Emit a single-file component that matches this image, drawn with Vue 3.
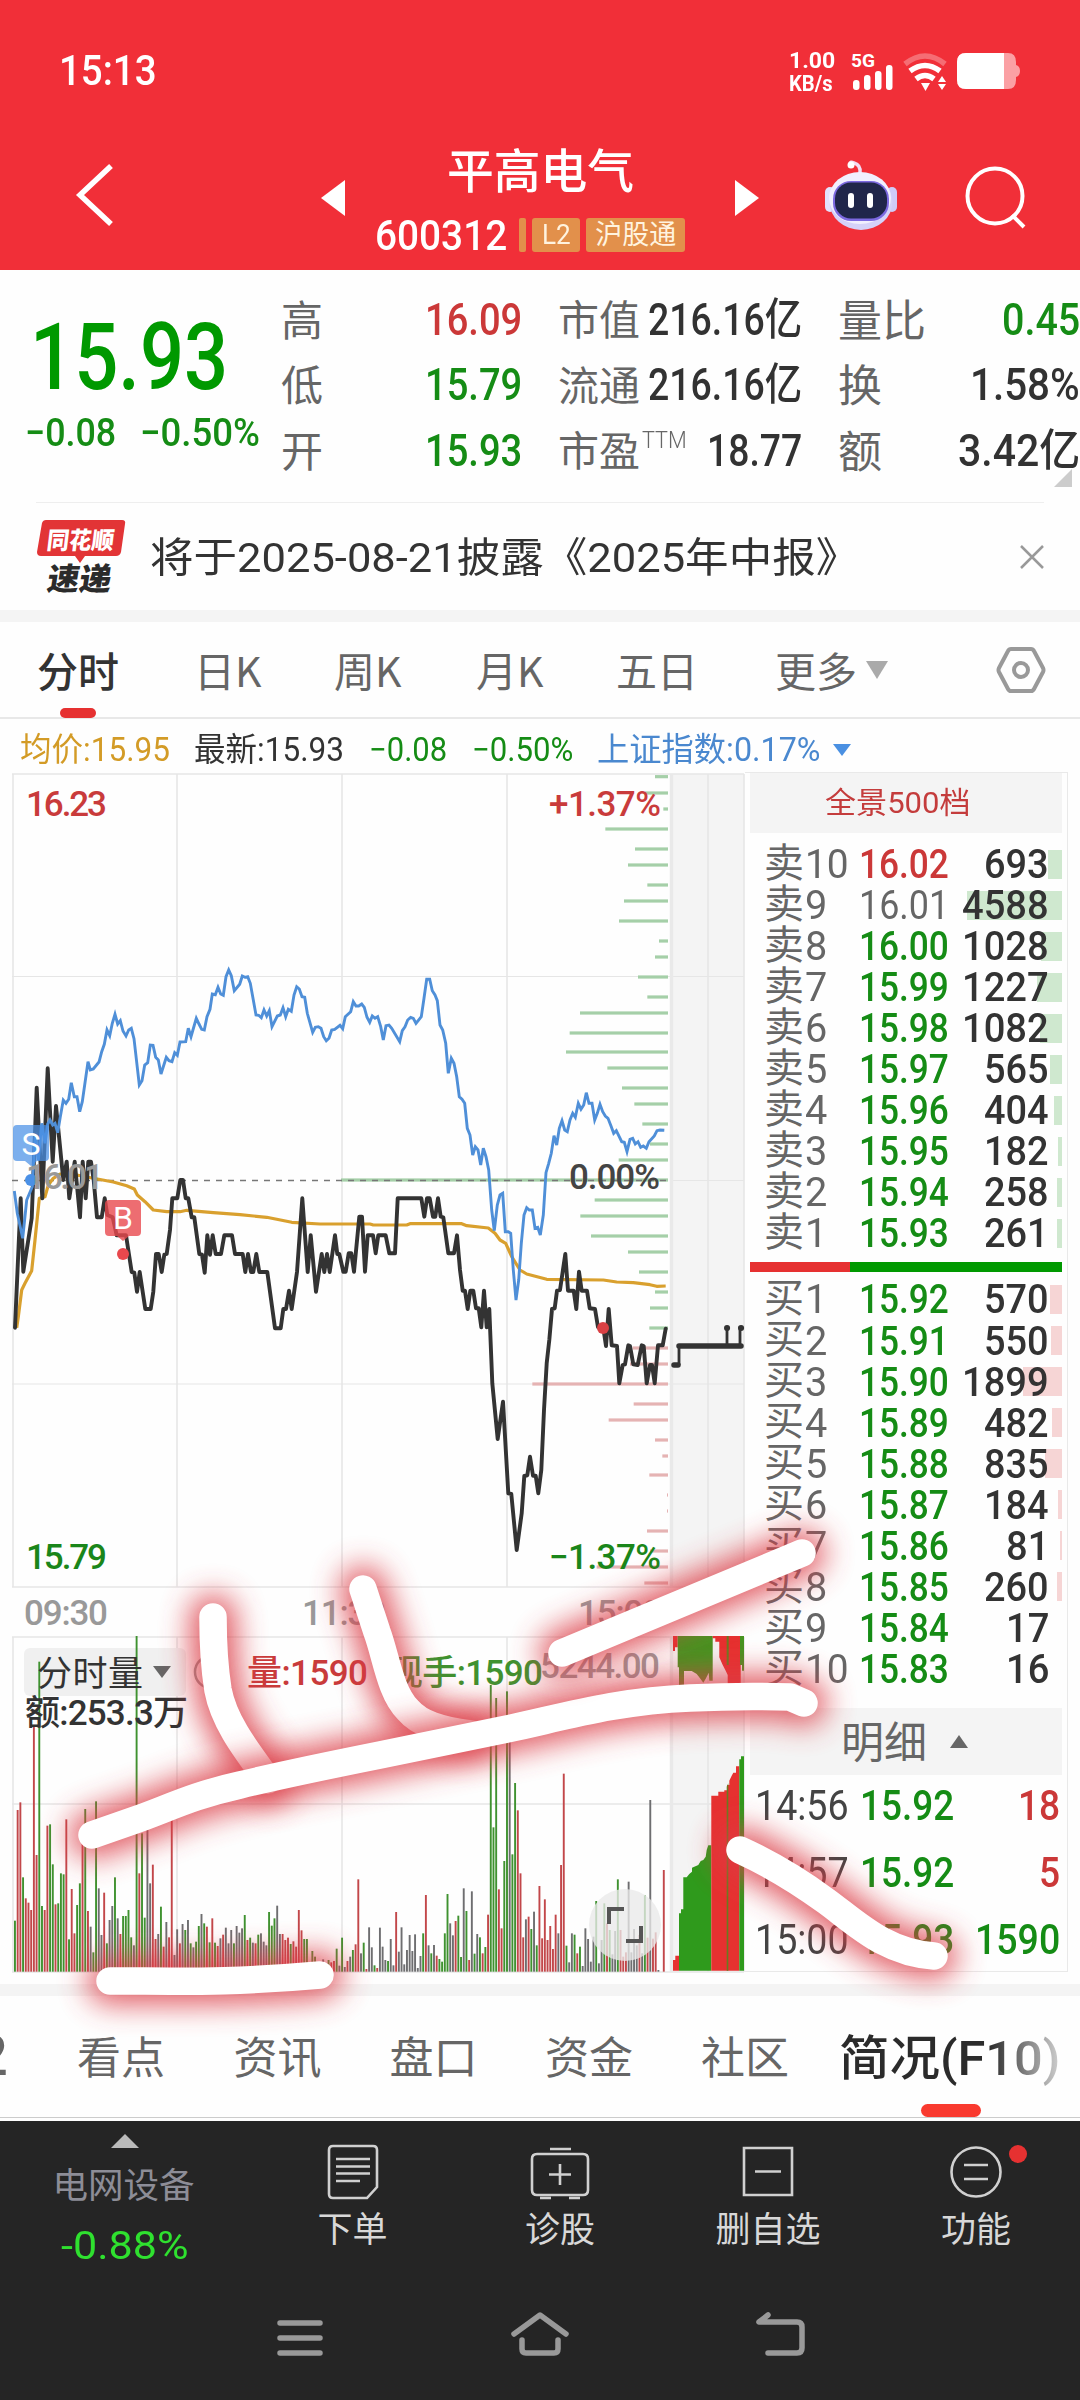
<script setup>
// Squeezes a label horizontally so that its layout box has the given width.
const vFit = {
  mounted(el, { value }) {
    const natural = el.offsetWidth
    el.style.transformOrigin = 'left center'
    el.style.transform = `scaleX(${value / natural})`
    el.style.marginRight = `${value - natural}px`
  },
}

const quotes = [
  [['高', '16.09', 'up', 97], ['市值', '216.16亿', 'ink', 154], ['量比', '0.45', 'down', 78]],
  [['低', '15.79', 'down', 97], ['流通', '216.16亿', 'ink', 154], ['换', '1.58%', 'ink', 110]],
  [['开', '15.93', 'down', 97], ['市盈', '18.77', 'ink', 95], ['额', '3.42亿', 'ink', 122]],
]

const asks = [
  ['卖10', '16.02', 693, 'up'], ['卖9', '16.01', 4588, 'flat'], ['卖8', '16.00', 1028, 'down'],
  ['卖7', '15.99', 1227, 'down'], ['卖6', '15.98', 1082, 'down'], ['卖5', '15.97', 565, 'down'],
  ['卖4', '15.96', 404, 'down'], ['卖3', '15.95', 182, 'down'], ['卖2', '15.94', 258, 'down'],
  ['卖1', '15.93', 261, 'down'],
]
const bids = [
  ['买1', '15.92', 570, 'down'], ['买2', '15.91', 550, 'down'], ['买3', '15.90', 1899, 'down'],
  ['买4', '15.89', 482, 'down'], ['买5', '15.88', 835, 'down'], ['买6', '15.87', 184, 'down'],
  ['买7', '15.86', 81, 'down'], ['买8', '15.85', 260, 'down'], ['买9', '15.84', 17, 'down'],
  ['买10', '15.83', 16, 'down'],
]
const depth = (v) => (v < 50 ? 0 : Math.max(1, Math.round((v * 95) / 4588)))
const ticks = [
  ['14:56', '15.92', '18', 'up'],
  ['14:57', '15.92', '5', 'up'],
  ['15:00', '15.93', '1590', 'down'],
]
const lowerTabs = ['看点', '资讯', '盘口', '资金', '社区']

// Chart series are kept in thirds of a pixel, relative to an origin.
const place = (ox, oy, s) =>
  s.trim().split(/\s+/).map((p) => {
    const [x, y] = p.split(',')
    return `${(ox + x / 3).toFixed(1)},${(oy + y / 3).toFixed(1)}`
  }).join(' ')

const priceLine = place(0, 1130, `45,593 62,205 70,425 95,265 110,-127 127,205 143,-185 158,95 168,-72 190,150 200,95 208,205 224,95 240,262 248,95 257,205 265,95 273,95 281,150 291,262 305,262 314,205 322,255 338,262 350,316 378,316 395,426 403,428 411,485 419,426 436,537 452,537 460,485 468,372 476,372 485,426 493,374 500,372 510,300 517,205 532,205 541,150 549,150 557,205 565,205 575,262 583,262 598,372 606,374 614,428 622,316 630,374 638,316 647,372 663,372 673,316 696,316 705,372 728,372 736,426 744,372 753,426 760,426 769,372 778,426 802,426 825,595 842,595 850,537 858,537 867,482 875,537 891,426 907,205 923,426 932,316 948,485 965,372 973,426 981,372 989,426 1005,316 1012,372 1018,372`)
  + ' ' + place(340, 1170, `10,305 17,305 26,250 34,250 42,305 58,140 66,140 75,305 83,196 99,196 107,250 115,196 137,196 148,250 165,250 173,85 244,85 253,140 261,85 269,85 279,140 286,140 294,85 302,140 310,142 325,250 342,250 351,196 360,300 368,362 375,362 383,417 391,362 400,362 408,415 416,415 424,472 432,362 440,472 448,417 457,640 473,807 489,695 505,970 514,972 530,1140 545,1030 553,918 562,916 570,860 579,917 587,917 595,970 604,900 612,720 620,580 628,510 636,417 644,415 651,362 660,360 676,252 684,362 701,362 709,417 717,305 725,362 741,362 749,415 765,417 774,472 790,474 798,528 806,417 815,526 831,528 838,640 848,585 855,583 865,526 870,528 880,583 893,585 905,526 911,528 920,640 930,585 936,585 944,640 954,526 968,526 977,476`)

const indexLine = place(0, 770, `43,1263 52,1330 68,1405 80,1290 97,1250 105,1100 115,1170 125,1060 135,1120 143,1062 150,1050 158,1065 165,1060 173,1088 181,1040 190,990 198,1000 206,988 214,938 223,980 231,980 239,1025 247,995 264,875 271,900 280,897 297,876 305,845 313,823 321,780 329,797 337,760 345,733 353,762 361,752 369,783 378,798 386,780 394,775 402,806 418,945 426,932 434,885 443,878 451,825 459,826 467,862 475,870 483,912 499,862 507,872 516,875 524,848 532,856 540,816 557,815 565,775 573,800 589,745 597,762 605,778 613,780 621,740 630,718 637,672 646,674 654,652 662,672 670,676 678,620 686,600 694,617 703,662 719,643 727,618 735,622 743,620 751,640 768,735 776,736 784,743 792,720 800,738 808,722 816,770 832,738 841,735 849,713 857,740 865,718 874,724 882,675 890,650 898,657 906,680 914,682 922,730 938,787 946,772 955,770 963,775 971,800 979,812 987,805 995,780 1004,778 1020,766 1028,776 1036,740 1052,725 1060,695 1068,708 1076,708 1085,702 1093,712 1101,742 1109,757 1117,738 1125,745 1133,740 1142,770`)
  + ' ' + place(340, 770, `130,810 138,767 147,765 155,775 179,815 187,782 195,770 203,750 212,742 220,745 228,760 244,740 252,685 260,628 269,628 277,662 285,675 292,692 300,765 308,780 317,820 325,910 334,865 342,880 350,920 358,980 366,988 374,1000 382,1075 390,1095 398,1155 406,1130 414,1140 422,1185 430,1135 438,1160 446,1200 455,1320 463,1382 472,1305 480,1275 488,1270 496,1385 505,1385 512,1390 520,1500 528,1590 536,1530 544,1420 552,1335 560,1313 568,1320 577,1320 585,1375 593,1372 601,1395 610,1335 618,1208 626,1180 634,1150 642,1097 650,1125 658,1075 666,1052 674,1080 682,1085 690,1050 698,1030 706,1042 715,1000 723,1018 731,1005 739,968 747,1000 756,1000 764,1050 772,1030 780,1003 788,1025 796,1038 804,1045 813,1068 821,1090 829,1082 845,1115 853,1117 861,1145 870,1108 878,1105 886,1122 894,1115 902,1132 910,1128 919,1135 927,1115 943,1098 951,1082 960,1080 973,1081`)

const averageLine = place(0, 1130, `50,593 55,560 65,480 75,460 95,422 105,330 118,205 135,200 145,165 160,145 180,132 230,135 280,145 340,156 380,167 403,177 412,195 435,215 460,240 500,245 540,245 560,241 640,248 720,254 800,262 875,277 960,282 1020,282`)
  + ' ' + place(340, 1170, `90,162 100,165 200,165 210,161 365,161 380,167 445,174 465,190 480,210 497,220 515,260 540,300 560,312 620,328 790,330 830,336 880,338 930,344 950,349 977,348`)

// Turnover by price level: y, left end
const profile = [
  [20, 945], [69, 915], [117, 970], [177, 796], [237, 885], [285, 864], [345, 922], [393, 852], [453, 837],
  [513, 957], [561, 945], [621, 894], [681, 922], [729, 720], [789, 689], [846, 678], [894, 802], [954, 846],
  [1002, 883], [1062, 907], [1122, 930], [1170, 836], [1230, 3], [1290, 764], [1338, 721], [1398, 753],
  [1446, 864], [1506, 897], [1566, 945], [1614, 930], [1674, 928], [1734, 878], [1782, 870], [1842, 577],
  [1902, 881], [1950, 806], [2010, 945], [2058, 967], [2115, 928], [2175, 981], [2223, 981], [2283, 921],
  [2343, 930], [2391, 770], [2439, 913],
].map(([y, x]) => ({ x: 340 + x / 3, w: (984 - x) / 3, y: 768.4 + y / 3, c: y > 1700 ? '#e5b3b3' : '#a5cfa8' }))

// Minute volumes: top edge and direction
const tones = { r: '#c2474a', g: '#3f9230', n: '#6e6e70' }
const volumes = `1052g 720r 697r 922g 985r 998r 1020r 468r 855r 275g 1008g 1020r 767r 763g 883g 1003r 1000g 910g 913g 748r 1108g 957r 1090r 1005g 940g 820r 717g 1023r 1070n 1147g 694g 955n 1095n 968r 1120g 1050n 1008n 922g 1045n 1092r 1038g 1038g 1020g 1102g 1126n 198g 910r 790g 1043g 780n 940n 884r 1107r 1092n 1010g 1130r 1056n 1102r 750r 1155n 1078n 1120r 1062n 1080g 1050n 1120g 1132n 1115g 1068g 1032n 1060g 1070r 1117g 1045r 1118g 1128r 1105n 1094r 1073n 1120n 1080n 1120g 1068n 1088n 1075n 1035g 1110r 1103g 1118n 1120r 1094g 1090n 1115n 1126n 1026g 1067g 1045g 1007n 1092n 1092r 1110r 1103r 1122g 1114r 1130r 1020r 1081r 1107g 1107g 1185n 1143g 1160g 1180n 1185g 1168n 1185n 1170g 1177r 1173r 1136g 1187n 1103g 1191n 1173r 1160n 1140g 1123r 928r 1150n 1118g 1197r 1072n 1132n 1186g 1194r 1073n 1130n 1170n 1173g 1107n 1186n 1026r 1145n 1072n 1183n 1140n 1095n 1143n 1093n 1194n 1158n 1090g 975r 1126n 1150g 1125n 1157r 1167g 1175g 1090g 972g 1060n 1096n 1053r 1037g 1161g 955n 1023g 1170r 964n 1151g 1092n 1102g 1150r 1131g 1034r 345g 772g 384g 958r 1075r 873g 364g 510n 853g 639g 721r 910r 1102r 1048n 1040r 1077g 1025n 1126g 948r 1105r 988r 1110r 1068r 1137r 1034r 1090n 885r 611r 1127g 1177n 1090n 1094g 1150r 1130g 1188n 1075n 1107n 1175n 1100n 993g 1180n 1110n 1000g 1060r 1080g 1153n 1083n 928g 1080r 1160r 1147r 935n 1147n 1077n 1126n 1095r 1150n 976g 1103r 690n 1106r 1087r 1200n 1205n 900r`
  .split(' ').map((s, i) => {
    const top = parseInt(s)
    return { x: 14 + i * 2.7035, y: 1570 + top / 3, h: (1205 - top) / 3, c: tones[s.at(-1)] }
  })

const auction = [
  ['#e63130', '879,1202 879,1170 886,1170 886,1157 897,1157 897,1202'],
  ['#2f9a1c', '897,1202 897,1030 903,1030 903,1018 910,1018 910,922 920,922 928,912 936,905 936,893 955,885 962,873 970,870 977,860 980,840 985,826 994,826 994,1202'],
  ['#e63130', '994,1202 994,677 1015,677 1015,665 1033,665 1033,661 1041,661 1041,645 1048,645 1048,632 1055,617 1060,608 1068,608 1068,589 1078,589 1078,1202'],
  ['#6a7a20', '1040,1202 1040,650 1045,640 1045,1202'],
  ['#2f9a1c', '1078,1202 1078,568 1083,568 1083,559 1092,559 1092,1202'],
  ['#e63130', '879,198 879,243 885,243 885,232 893,232 893,198'],
  ['#459420', '893,198 893,292 897,292 897,350 912,350 912,303 935,303 950,312 960,325 970,338 978,325 986,308 988,332 998,332 998,198'],
  ['#e63130', '998,198 998,205 1006,205 1006,215 1018,215 1018,262 1028,285 1036,300 1043,315 1043,350 1082,350 1082,198'],
  ['#6a7a20', '1040,198 1040,285 1046,285 1046,198'],
  ['#459420', '1080,198 1080,285 1086,285 1086,302 1092,302 1092,198'],
].map(([c, s]) => ({ c, p: place(380, 1570, s) }))

const marks = [
  'M213 1617C213 1640 214 1665 218 1690C224 1722 246 1750 268 1780',
  'M363 1589L377 1632C386 1656 390 1692 408 1710C420 1724 440 1730 470 1734',
  'M92 1835L135 1820C165 1810 190 1796 240 1785C290 1773 330 1765 380 1755L507 1729C560 1718 615 1701 690 1698C730 1696 760 1696 790 1697L804 1703',
  'M562 1653L802 1553',
  'M110 1981C180 1981 230 1983 320 1975',
  'M740 1850C775 1866 800 1882 826 1901C855 1922 885 1953 934 1956',
]
</script>

<template>
  <div class="screen">
    <header class="top">
      <div class="status">
        <b v-fit="98" class="clock">15:13</b>
        <div class="sys">
          <div class="rate"><span v-fit="46">1.00</span><span v-fit="44">KB/s</span></div>
          <svg width="180" height="44" viewBox="848 50 180 44">
            <text x="851" y="67" class="g5" textLength="24" lengthAdjust="spacingAndGlyphs">5G</text>
            <g fill="#fff"><rect x="853" y="80" width="6.500" height="10" rx="3" /><rect x="864" y="75" width="6.500" height="15" rx="3" /><rect x="875" y="71" width="6.500" height="19" rx="3" /><rect x="886" y="65" width="6.500" height="25" rx="3" /></g>
            <g fill="none" stroke="#fff" stroke-width="5.500">
              <path d="M905 64Q925 48 945 64" opacity=".3" />
              <path d="M910 71Q925 60 940 71" /><path d="M916 79Q925 72 934 79" />
            </g>
            <path d="M921 83h9l-4.500 8zM938 82l4-6 4 6zM938 84h8l-4 6z" fill="#fff" />
            <path d="M966 53h42q8 0 8 9v3q4 1 4 6t-4 6v3q0 9-8 9h-42q-9 0-9-9V62q0-9 9-9z" fill="#fba0a4" />
            <path d="M966 53h38v36h-38q-9 0-9-9V62q0-9 9-9z" fill="#fff" />
          </svg>
        </div>
      </div>
      <div class="nav">
        <svg class="back" width="44" height="70" viewBox="0 0 44 70"><path d="M37 6L6 35L37 64" fill="none" stroke="#fff" stroke-width="5.500" /></svg>
        <svg class="prev" width="24" height="36" viewBox="0 0 24 36"><path d="M24 0V36L0 18z" fill="#fff" /></svg>
        <div class="name">
          <div v-fit="187" class="title">平高电气</div>
          <div class="code"><span v-fit="132" class="num">600312</span><i /><em class="l2"><span v-fit="29">L2</span></em><em class="hgt">沪股通</em></div>
        </div>
        <svg class="next" width="24" height="36" viewBox="0 0 24 36"><path d="M0 0V36L24 18z" fill="#fff" /></svg>
        <svg class="bot" width="76" height="72" viewBox="822 158 76 72">
          <path d="M860 173q1-8-6-10M850 164q0-3 4-1" fill="none" stroke="#f2ddf3" stroke-width="3.500" stroke-linecap="round" />
          <circle cx="851" cy="165" r="3.500" fill="#fff" />
          <rect x="825" y="187" width="10" height="25" rx="5" fill="#e3e1fc" /><rect x="887" y="187" width="10" height="25" rx="5" fill="#cfcbf8" />
          <ellipse cx="861" cy="202" rx="31.500" ry="28" fill="#d5d2f9" /><ellipse cx="860" cy="198" rx="31" ry="26" fill="#f1effe" />
          <rect x="833" y="181" width="56" height="40" rx="18" fill="#7c69e0" /><rect x="835" y="182.500" width="52" height="36" rx="16" fill="#20264a" />
          <rect x="848" y="193" width="6" height="15" rx="3" fill="#fff" /><rect x="867" y="193" width="6" height="15" rx="3" fill="#fff" />
        </svg>
        <svg class="find" width="64" height="64" viewBox="964 166 64 64"><g fill="none" stroke="#fff" stroke-width="4"><circle cx="995" cy="197" r="27.500" /><path d="M1012 216L1024 228" /></g></svg>
      </div>
    </header>

    <section class="quote">
      <div class="last">
        <div v-fit="198" class="price">15.93</div>
        <div class="change"><span v-fit="91">−0.08</span><span v-fit="120">−0.50%</span></div>
      </div>
      <div class="grid">
        <template v-for="(row, i) in quotes" :key="i">
          <template v-for="(c, j) in row" :key="c[0]">
            <div :class="['lab', 'lab' + j]">{{ c[0] }}<sup v-if="c[0] === '市盈'"><span v-fit="45">TTM</span></sup></div>
            <div :class="['val', c[2]]"><span v-fit="c[3]">{{ c[1] }}</span></div>
          </template>
        </template>
      </div>
      <svg class="corner" width="18" height="18"><path d="M18 0V18H0z" fill="#ccc" /></svg>
    </section>

    <section class="news">
      <svg width="92" height="78" viewBox="36 518 92 78">
        <path d="M46 520H122q4 0 3 4L121 552q-1 4-5 4H85L80 563L75 556H41q-4 0-4-4L42 523q1-3 4-3z" fill="#e23436" />
        <text transform="translate(46 549) skewX(-7)" class="ths" fill="#fff" font-size="24" textLength="67" lengthAdjust="spacingAndGlyphs">同花顺</text>
        <text transform="translate(46 590) skewX(-9)" class="ths" fill="#2b2b2b" font-size="31" textLength="64" lengthAdjust="spacingAndGlyphs">速递</text>
      </svg>
      <p v-fit="709">将于2025-08-21披露《2025年中报》</p>
      <svg class="close" width="26" height="26"><path d="M2 2L24 24M24 2L2 24" stroke="#999" stroke-width="2.500" /></svg>
    </section>
    <div class="band" />

    <nav class="periods">
      <b>分时</b><span>日K</span><span>周K</span><span>月K</span><span>五日</span><span>更多</span>
      <svg class="caret" width="22" height="18"><path d="M0 0H22L11 18z" fill="#aaa" /></svg>
      <svg class="gear" width="50" height="48" viewBox="0 0 50 48"><path d="M15 3H35Q37 3 38 5L47 22Q48 24 47 26L38 43Q37 45 35 45H15Q13 45 12 43L3 26Q2 24 3 22L12 5Q13 3 15 3z" fill="none" stroke="#999" stroke-width="4" /><circle cx="25" cy="24" r="7" fill="none" stroke="#999" stroke-width="4" /></svg>
    </nav>

    <div class="info">
      <span v-fit="150" class="avg">均价:15.95</span><span v-fit="150">最新:15.93</span><span v-fit="78" class="down">−0.08</span><span v-fit="101" class="down">−0.50%</span><span v-fit="224" class="idx">上证指数:0.17%</span>
      <svg width="20" height="14"><path d="M1 1H19L10 13z" fill="#4a90e2" /></svg>
    </div>

    <main class="main">
      <svg class="chart" width="745" height="1201" viewBox="0 772 745 1201">
        <g fill="#f4f4f4"><rect x="672" y="774" width="72" height="813" /><rect x="672" y="1637" width="72" height="335" /></g>
        <g stroke="#e6e6e6" stroke-width="1.600" fill="none">
          <path d="M12 774H744M12 1587H744M12 1637H744M12 1804H744M12 1972H744M13 774V1587M177 774V1587M342 774V1587M507 774V1587M708 774V1587M744 774V1587M13 1637V1972M177 1637V1972M342 1637V1972M507 1637V1972M708 1637V1972M744 1637V1972" />
          <path d="M12 976.500H744M12 1384H744" stroke-width="1.200" /><path d="M672 1180.500H744" stroke-width="1" />
          <path d="M671.500 774V1587M671.500 1637V1972" stroke-width="3.500" stroke="#e9e9e9" />
        </g>
        <rect v-for="(b, i) in profile" :key="i" :x="b.x" :y="b.y" :width="b.w" height="3.200" :fill="b.c" />
        <path d="M12 1180.500H668" stroke="#777" stroke-width="1.500" stroke-dasharray="6 6" />
        <polyline :points="averageLine" fill="none" stroke="#d9a02e" stroke-width="3.200" stroke-linejoin="round" />
        <polyline :points="priceLine" fill="none" stroke="#333" stroke-width="3.900" stroke-linejoin="round" stroke-linecap="round" />
        <polyline :points="indexLine" fill="none" stroke="#4f8fd8" stroke-width="2.900" />
        <g fill="none" stroke="#333"><path d="M674 1365H678M679 1346H741" stroke-width="5.500" stroke-linecap="round" /><path d="M679 1365V1346M727 1346V1328M740 1346V1328H743" stroke-width="2.800" /><path d="M727 1328h.1M741 1328h.1" stroke-width="6" stroke-linecap="round" /></g>
        <circle cx="603" cy="1328" r="6" fill="#d94044" />
        <g fill="#4a90e6"><path d="M17 1125H45q4 0 4 4V1157q0 4-4 4H37L31 1166L25 1161H17q-4 0-4-4V1129q0-4 4-4z" opacity=".72" /><circle cx="31" cy="1180" r="6" /></g>
        <text x="31" y="1155" class="badge">S</text>
        <g fill="#e8484d"><path d="M109 1200H137q4 0 4 4V1232q0 4-4 4H129L123 1241L117 1236H109q-4 0-4-4V1204q0-4 4-4z" opacity=".8" /><circle cx="123" cy="1254" r="6" /></g>
        <text x="123" y="1229" class="badge">B</text>
        <g class="axis">
          <text x="26" y="816" fill="#c93b3b" textLength="81">16.23</text>
          <text x="549" y="816" fill="#c93b3b" textLength="112">+1.37%</text>
          <text x="26" y="1189" fill="#999" textLength="78">16.01</text>
          <text x="569" y="1189" fill="#444" textLength="91">0.00%</text>
          <text x="26" y="1569" fill="#1a861a" textLength="81">15.79</text>
          <text x="549" y="1569" fill="#1a861a" textLength="112">−1.37%</text>
          <g fill="#999"><text x="24" y="1625" textLength="84">09:30</text><text x="302" y="1625" textLength="84">11:30</text><text x="578" y="1625" textLength="84">15:00</text></g>
        </g>
        <rect x="24" y="1648" width="162" height="48" rx="6" fill="#f0f0f0" />
        <rect v-for="(b, i) in volumes" :key="'v' + i" :x="b.x" :y="b.y" width="1.900" :height="b.h" :fill="b.c" />
        <polygon v-for="(a, i) in auction" :key="'a' + i" :points="a.p" :fill="a.c" />
        <g class="axis">
          <text x="37" y="1686" fill="#333" class="plain" textLength="106">分时量</text>
          <path d="M153 1666H171L162 1678z" fill="#666" />
          <circle cx="211" cy="1672" r="16" fill="none" stroke="#999" stroke-width="2.500" />
          <text x="247" y="1685" fill="#c93b3b" textLength="121">量:1590</text>
          <text x="388" y="1685" fill="#3f9230" textLength="155">现手:1590</text>
          <text x="25" y="1725" fill="#333" textLength="163">额:253.3万</text>
          <text x="540" y="1678" fill="#999" textLength="120">5244.00</text>
        </g>
        <circle cx="625" cy="1925" r="36" fill="#e9e9e9" opacity=".78" />
        <path d="M609 1924V1909H624M626 1941H641V1926" fill="none" stroke="#555" stroke-width="4" />
      </svg>

      <aside class="book">
        <div class="full"><span v-fit="146">全景500档</span></div>
        <div class="levels asks">
          <div v-for="r in asks" :key="r[0]" class="row">
            <i :style="{ width: depth(r[2]) + 'px' }" /><span class="lv"><span>{{ r[0][0] }}</span><span v-fit="(r[0].length - 1) * 22">{{ r[0].slice(1) }}</span></span>
            <span :class="['px', r[3]]"><span v-fit="90">{{ r[1] }}</span></span><span class="vol"><span v-fit="String(r[2]).length * 21.600">{{ r[2] }}</span></span>
          </div>
        </div>
        <div class="ratio" />
        <div class="levels bids">
          <div v-for="r in bids" :key="r[0]" class="row">
            <i :style="{ width: depth(r[2]) + 'px' }" /><span class="lv"><span>{{ r[0][0] }}</span><span v-fit="(r[0].length - 1) * 22">{{ r[0].slice(1) }}</span></span>
            <span :class="['px', r[3]]"><span v-fit="90">{{ r[1] }}</span></span><span class="vol"><span v-fit="String(r[2]).length * 21.600">{{ r[2] }}</span></span>
          </div>
        </div>
        <div class="dhead">明细<svg width="18" height="13"><path d="M9 0L18 13H0z" fill="#666" /></svg></div>
        <div v-for="t in ticks" :key="t[0]" class="tick">
          <span v-fit="94" class="tm">{{ t[0] }}</span><span><span v-fit="94" class="down">{{ t[1] }}</span></span><span :class="['tv', t[3]]"><span v-fit="t[2].length * 21.200">{{ t[2] }}</span></span>
        </div>
      </aside>
    </main>
    <div class="band low" />

    <nav class="lower">
      <span class="cut">2</span>
      <span v-for="t in lowerTabs" :key="t" class="t">{{ t }}</span>
      <span class="sel"><b v-fit="221">简况(F10)</b></span>
    </nav>

    <footer class="foot">
      <div class="acts">
        <div class="sector"><svg width="28" height="14"><path d="M14 0L28 14H0z" fill="#bbb" /></svg><span>电网设备</span><em v-fit="127">-0.88%</em></div>
        <div class="act"><svg width="64" height="60" viewBox="0 0 64 60"><path d="M12 5H52q4 0 4 4V46L46 57H12q-4 0-4-4V9q0-4 4-4zM15 18H49M15 25.500H49M15 32.500H49M15 40H39" /></svg>下单</div>
        <div class="act"><svg width="64" height="60" viewBox="0 0 64 60"><path d="M22 8H43M9 13H55q5 0 5 5V49q0 5-5 5H9q-5 0-5-5V18q0-5 5-5zM12 57H23M41 57H52M21 33.500H43M32 23V44" /></svg>诊股</div>
        <div class="act"><svg width="64" height="60" viewBox="0 0 64 60"><path d="M8 7H56V54H8zM19 30.500H45" /></svg>删自选</div>
        <div class="act"><svg width="64" height="60" viewBox="0 0 64 60"><circle cx="32" cy="31" r="24.500" /><path d="M20 24H44M20 38H44" /></svg>功能<i /></div>
      </div>
      <div class="sysnav">
        <svg width="60" height="50" viewBox="270 2308 60 50"><path d="M280 2323H320M280 2338H320M280 2353H320" /></svg>
        <svg width="64" height="50" viewBox="508 2308 64 50"><path d="M514 2334L540 2315L566 2334M522 2340V2349q0 4 4 4H554q4 0 4-4V2340" /></svg>
        <svg width="60" height="50" viewBox="750 2308 60 50"><path d="M768 2315L759 2322H797q5 0 5 5V2348q0 5-5 5H768" /></svg>
      </div>
    </footer>

    <svg class="ink-layer" width="1080" height="2400" viewBox="0 0 1080 2400">
      <defs><filter id="glow" filterUnits="userSpaceOnUse" x="0" y="1400" width="1080" height="720"><feGaussianBlur stdDeviation="15" /></filter></defs>
      <g v-for="(d, i) in marks" :key="i" fill="none" stroke-linecap="round" stroke-linejoin="round">
        <path :d="d" stroke="#dc3c46" stroke-width="46" opacity=".85" filter="url(#glow)" /><path :d="d" stroke="#fff" stroke-width="27.500" />
      </g>
    </svg>
  </div>
</template>

<style>
body { background: #fff; }
</style>

<style scoped>
* { box-sizing: border-box; }
.screen { position: relative; width: 1080px; height: 2400px; overflow: hidden; background: #fefefe; color: #333; font-family: Roboto, "Noto Sans CJK SC", sans-serif; line-height: 1; white-space: nowrap; }
span, em, b, i { display: inline-block; font-style: normal; }
svg { display: block; flex: none; }
.up { color: #cb3838; }
.down { color: #158c15; }
.flat { color: #666; font-weight: 400; }
.ink { color: #323232; }

.top { height: 270px; background: #f12f38; color: #fff; display: flex; flex-direction: column; }
.status { height: 140px; padding: 50px 52px 0 59px; display: flex; justify-content: space-between; align-items: flex-start; }
.clock { font-size: 42px; font-weight: 500; }
.sys { display: flex; gap: 13px; }
.rate { display: flex; flex-direction: column; gap: 1px; font-size: 22px; font-weight: 700; width: 46px; }
.rate span { align-self: flex-start; }
.g5 { font-size: 18px; font-weight: 700; fill: #fff; }
.nav { display: flex; height: 130px; align-items: flex-start; padding-left: 74px; }
.back { margin-top: 20px; }
.prev { margin: 40px 0 0 203px; }
.name { width: 390px; height: 130px; padding-left: 30px; }
.title { margin: 8px 0 0 72px; font-size: 47px; font-weight: 500; display: inline-block; }
.code { display: flex; align-items: center; height: 36px; margin-top: 22px; }
.num { font-size: 42px; font-weight: 500; position: relative; top: 1px; }
.code i { width: 7px; height: 34px; background: #e2904b; border-radius: 2px; margin: 0 6px 0 12px; }
.code em { height: 34px; line-height: 34px; background: #e2904b; border-radius: 3px; color: #fff3df; font-size: 27px; text-align: center; }
.l2 { width: 48px; margin-right: 6px; }
.hgt { width: 99px; }
.next { margin-top: 40px; }
.bot { margin: 18px 0 0 63px; }
.find { margin: 25px 0 0 66px; }

.quote { position: relative; height: 232px; display: flex; }
.quote::after { content: ""; position: absolute; left: 36px; right: 36px; bottom: -1px; height: 1.500px; background: #eee; }
.last { width: 281px; padding-top: 41px; color: #009900; }
.price { margin-left: 30px; font-size: 93px; font-weight: 500; display: inline-block; }
.change { display: flex; gap: 24px; margin: 10px 0 0 25px; font-size: 39px; font-weight: 500; color: #158c15; }
.grid { display: grid; grid-template-columns: 100px 141px 130px 150px 120px 158px; grid-auto-rows: 65.500px; align-items: center; padding-top: 17px; height: 214px; }
.lab { color: #666; font-size: 42px; font-family: "Noto Sans CJK SC", sans-serif; margin-top: -4px; }
.lab1 { padding-left: 36px; font-size: 41px; }
.lab2 { padding-left: 36px; font-size: 44px; }
.lab sup { vertical-align: top; font-size: 24px; line-height: 1; font-family: Roboto; font-weight: 300; position: relative; top: 0; left: 2px; display: inline-block; width: 0; }
.val { font-size: 44px; font-weight: 500; display: flex; justify-content: flex-end; }
.corner { position: absolute; right: 8px; bottom: 15px; }

.news { height: 108px; display: flex; align-items: center; padding: 1px 36px 0; }
.news p { margin: 4px 0 0 22px; font-size: 41px; display: inline-block; }
.news .close { margin: 0 -1px 0 auto; }
.ths { font-family: "Noto Sans CJK SC", sans-serif; font-weight: 900; }
.band { height: 12px; background: #f4f4f4; }

.periods { height: 97px; display: grid; grid-template-columns: 157px 140px 142px 140px 159px 91px 130px 60px; padding-left: 37px; align-items: center; border-bottom: 2px solid #e8e8e8; font-size: 41px; color: #666; position: relative; font-family: "Noto Sans CJK SC", sans-serif; }
.periods b { font-weight: 500; color: #333; }
.periods::after { content: ""; position: absolute; left: 60px; bottom: -1px; width: 36px; height: 10px; border-radius: 5px; background: #e63131; }

.info { height: 53px; padding: 8px 0 0 20px; display: flex; gap: 24.500px; align-items: center; font-size: 33px; }
.info .avg { color: #d39b26; }
.info .idx { color: #4a88cf; }
.info svg { margin-left: -13px; }

.main { display: flex; height: 1200px; }
.axis text { font-size: 35px; font-weight: 500; }
.axis .plain { font-weight: 400; }
.badge { font-size: 32px; fill: #fff; text-anchor: middle; }
.book { width: 323px; border: 1.500px solid #e9e9e9; border-left: 0; padding: 0 5px; height: 1200px; }
.full { height: 60px; background: #f4f4f4; color: #c43c3c; font-size: 30px; display: flex; align-items: center; padding-left: 75px; }
.levels { font-size: 41.500px; font-weight: 500; }
.asks { padding-top: 10px; }
.bids { padding-top: 6px; }
.row { height: 41.050px; position: relative; isolation: isolate; display: grid; grid-template-columns: 95px 100px 90px; align-items: center; padding-left: 14px; }
.row > i { position: absolute; right: 0; top: 6.500px; height: 29px; z-index: -1; }
.asks i { background: #cfe8cf; }
.bids i { background: #f6d5d5; }
.lv { color: #666; font-weight: 400; display: flex; align-items: center; }
.lv span:first-child { font-size: 40px; margin-right: 1px; }
.px, .vol, .tv { display: flex; }
.vol { justify-content: flex-end; }
.ratio { height: 10px; margin-top: 9px; background: linear-gradient(90deg, #e63131 100px, #009900 100px); }
.dhead { height: 67px; margin-top: 19px; padding: 4px 0 0 91px; background: #f4f4f4; font-size: 43px; color: #666; display: flex; align-items: center; gap: 23px; }
.dhead svg { margin-top: -4px; }
.tick { height: 67px; display: grid; grid-template-columns: 105px 100px 104px; align-items: center; padding: 0 0 5px 5px; font-size: 42px; font-weight: 500; }
.tm { font-weight: 400; color: #444; }
.tick .down { max-width: none; }
.tv { justify-content: flex-end; padding-right: 4px; }

.low { margin-top: 12px; }
.lower { position: relative; height: 122px; border-bottom: 1.500px solid #ccc; display: grid; grid-template-columns: 77px 156.500px 156px 155.500px 156px 138px 240px; align-items: center; padding-top: 5px; font-size: 44px; color: #666; }
.cut { font-size: 56px; font-weight: 500; margin-left: -24px; margin-top: -6px; }
.sel { font-size: 48px; }
.sel b { font-weight: 500; padding: 4px 0; background: linear-gradient(90deg, #2b2b2b 68%, #cfcfcf 100%); -webkit-background-clip: text; background-clip: text; color: transparent; }
.lower::after { content: ""; position: absolute; left: 921px; bottom: 0; width: 60px; height: 13px; border-radius: 6.500px; background: #f93a2f; }

.foot { margin-top: 3px; height: 279px; background: #252525; }
.acts { display: grid; grid-template-columns: 249px 207px 208px 208px 208px; height: 187px; }
.sector { display: flex; flex-direction: column; align-items: center; padding-top: 13px; font-size: 35.500px; color: #8d8d97; }
.sector span { margin: 21px 2px 0 0; }
.sector em { color: #2fe12f; font-size: 38px; margin: 22px 0 0 61px; align-self: flex-start; }
.act { position: relative; display: flex; flex-direction: column; align-items: center; padding-top: 20px; font-size: 35px; color: #d8d8d8; gap: 12px; }
.act svg { fill: none; stroke: #d0d0d0; stroke-width: 2.600; }
.act i { position: absolute; left: 137px; top: 24px; width: 18px; height: 18px; border-radius: 50%; background: #e63131; }
.sysnav { display: flex; padding-left: 270px; gap: 178px; }
.sysnav svg { fill: none; stroke: #999; stroke-width: 5.500; stroke-linecap: round; stroke-linejoin: round; }
.ink-layer { position: absolute; left: 0; top: 0; pointer-events: none; }
</style>
